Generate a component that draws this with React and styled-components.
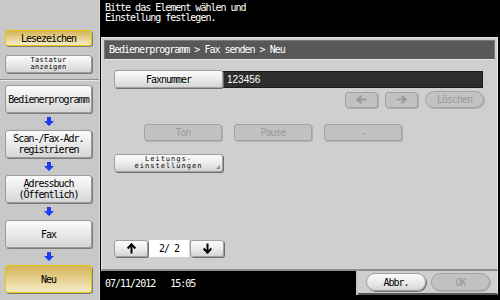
import React from 'react';
import styled, { createGlobalStyle, css } from 'styled-components';

const GlobalStyle = createGlobalStyle`
    html, body {
        margin: 0;
        padding: 0;
        background: #000;
    }
    body {
        font-family: "DejaVu Sans Mono", "Liberation Mono", monospace;
    }
`

const mono = css`
    font-family: "DejaVu Sans Mono", "Liberation Mono", monospace;
    font-size: 10px;
    letter-spacing: -1px;
`

const Screen = styled.div`
    display: flex;
    width: 500px;
    height: 300px;
    overflow: hidden;
`

const Sidebar = styled.div`
    display: flex;
    flex-direction: column;
    align-items: stretch;
    width: 100px;
    box-sizing: border-box;
    padding: 30px 7px 0 5px;
    background: #c8c8c8;
    border-right: 1px solid #d8d8d8;
`

const SideGroup = styled.div`
    display: flex;
    flex-direction: column;
    gap: 9px;
    padding-bottom: 6px;
    margin: 0 -7px 0 -5px;
    padding-left: 5px;
    padding-right: 7px;
    border-bottom: 1px solid #8c8c8c;
    box-shadow: 0 1px 0 #e4e4e4;
`

const SideButton = styled.div`
    ${mono};
    display: flex;
    align-items: center;
    justify-content: center;
    text-align: center;
    box-sizing: border-box;
    height: ${props => props.h || 28}px;
    margin-top: ${props => props.mt || 0}px;
    line-height: 11px;
    color: #000;
    border-radius: 3px;
    border: 1px solid ${props => props.active ? '#e8c800' : '#9a9a9a'};
    background: ${props => props.active
        ? 'linear-gradient(#d2b45a, #e6d08e 50%, #f4ecc8)'
        : 'linear-gradient(#fbfbfb, #e6e6e6 60%, #d6d6d6)'};
    box-shadow: 1px 1px 0 #7c7c7c;
`

const SmallLabel = styled.span`
    font-family: "DejaVu Sans Mono", monospace;
    font-size: 7px;
    letter-spacing: ${props => props.wide ? '1px' : '0.3px'};
    line-height: 7px;
`

const FlowArrow = styled.div`
    display: flex;
    align-items: center;
    justify-content: center;
    height: 17px;
`

const Right = styled.div`
    display: flex;
    flex-direction: column;
    flex: 1;
    background: #000;
`

const Message = styled.div`
    ${mono};
    height: 37px;
    box-sizing: border-box;
    padding: 3px 0 0 5px;
    line-height: 10px;
    color: #fff;
    white-space: pre;
`

const Panel = styled.div`
    display: flex;
    flex-direction: column;
    margin-left: 1px;
    width: 397px;
`

const PanelBody = styled.div`
    display: flex;
    flex-direction: column;
    height: 234px;
    box-sizing: border-box;
    padding: 2px 2px 0 2px;
    background: #cfcfcf;
    border: 1px solid #e6e6e6;
    border-bottom: 2px solid #8e8e8e;
`

const Breadcrumb = styled.div`
    ${mono};
    height: 20px;
    box-sizing: border-box;
    padding: 3px 0 0 4px;
    line-height: 12px;
    color: #fff;
    background: #585858;
    border: 1px solid #7a7a7a;
    border-bottom-color: #e8e8e8;
`

const Content = styled.div`
    display: flex;
    flex-direction: column;
    flex: 1;
    padding: 10px 11px 0 10px;
`

const Row = styled.div`
    display: flex;
    align-items: center;
    gap: ${props => props.gap || 0}px;
    justify-content: ${props => props.end ? 'flex-end' : 'flex-start'};
    margin-top: ${props => props.mt || 0}px;
    margin-bottom: ${props => props.mb || 0}px;
    padding-left: ${props => props.pl || 0}px;
`

const Button = styled.div`
    ${mono};
    position: relative;
    display: flex;
    align-items: center;
    justify-content: center;
    text-align: center;
    box-sizing: border-box;
    width: ${props => props.w}px;
    height: ${props => props.h || 17}px;
    border-radius: ${props => props.pill ? '9px' : '3px'};
    ${props => props.disabled ? css`
        color: #9a9a9a;
        background: #c2c2c2;
        border: 1px solid #a2a2a2;
        box-shadow: 1px 1px 0 #b0b0b0;
    ` : css`
        color: #000;
        background: linear-gradient(#fcfcfc, #e8e8e8 60%, #d4d4d4);
        border: 1px solid #a0a0a0;
        box-shadow: 1px 1px 0 #6e6e6e;
    `}
`

const CornerMark = styled.span`
    position: absolute;
    right: 2px;
    bottom: 2px;
    width: 0;
    height: 0;
    border-left: 4px solid transparent;
    border-bottom: 4px solid #8a8a8a;
`

const Field = styled.div`
    display: flex;
    align-items: center;
    width: 260px;
    height: 17px;
    box-sizing: border-box;
    padding-left: 3px;
    font-family: "Liberation Sans", Arial, sans-serif;
    font-size: 10px;
    color: #fff;
    background: #2e2e2e;
    border: 1px solid #1a1a1a;
`

const PageBox = styled.div`
    ${mono};
    display: flex;
    align-items: center;
    justify-content: center;
    width: 40px;
    height: 17px;
    background: #fff;
    white-space: pre;
`

const Spacer = styled.div`
    flex: 1;
`

const BottomRow = styled.div`
    display: flex;
    height: 24px;
`

const DateBar = styled.div`
    ${mono};
    flex: 1;
    padding: 7px 0 0 4px;
    color: #fff;
    white-space: pre;
    border-right: 2px solid #c8c8c8;
`

const Actions = styled.div`
    display: flex;
    gap: 5px;
    width: 140px;
    box-sizing: border-box;
    padding: 2px 0 0 8px;
    background: #cfcfcf;
    border-right: 1px solid #e6e6e6;
    border-bottom: 2px solid #555;
`

const Arrow = ({ dir = 'down', color = '#000', size = 10 }) => {
    const rot = { up: 180, down: 0, left: 90, right: -90 }[dir];
    return (
        <svg width={size} height={size} viewBox="0 0 10 10" style={{ transform: `rotate(${rot}deg)` }}>
            <path d="M5 0.5 V8.5 M1.5 5 L5 8.8 L8.5 5" fill="none" stroke={color} strokeWidth="1.8" strokeLinejoin="miter" />
        </svg>
    )
}

const BlueArrow = () => (
    <svg width="10" height="9" viewBox="0 0 10 9">
        <path d="M3 0 H7 V4 H10 L5 9 L0 4 H3 Z" fill="#1c3cf0" />
    </svg>
)

const App = () => {
    return (
        <Screen>
            <GlobalStyle />
            <Sidebar>
                <SideGroup>
                    <SideButton h={16} active>Lesezeichen</SideButton>
                    <SideButton h={18}><SmallLabel>Tastatur<br />anzeigen</SmallLabel></SideButton>
                </SideGroup>
                <SideButton mt={5}>Bedienerprogramm</SideButton>
                <FlowArrow><BlueArrow /></FlowArrow>
                <SideButton>Scan-/Fax-Adr.<br />registrieren</SideButton>
                <FlowArrow><BlueArrow /></FlowArrow>
                <SideButton>Adressbuch<br />(Öffentlich)</SideButton>
                <FlowArrow><BlueArrow /></FlowArrow>
                <SideButton>Fax</SideButton>
                <FlowArrow><BlueArrow /></FlowArrow>
                <SideButton active>Neu</SideButton>
            </Sidebar>
            <Right>
                <Message>{'Bitte das Element wählen und\nEinstellung festlegen.'}</Message>
                <Panel>
                    <PanelBody>
                        <Breadcrumb>Bedienerprogramm &gt; Fax senden &gt; Neu</Breadcrumb>
                        <Content>
                            <Row>
                                <Button w={109} h={18}>Faxnummer</Button>
                                <Field>123456</Field>
                            </Row>
                            <Row end gap={7} mt={3}>
                                <Button w={33} h={16} disabled><Arrow dir="left" color="#9a9a9a" size={11} /></Button>
                                <Button w={33} h={16} disabled><Arrow dir="right" color="#9a9a9a" size={11} /></Button>
                                <Button w={59} h={17} pill disabled>Löschen</Button>
                            </Row>
                            <Row gap={12} mt={16} pl={30}>
                                <Button w={78} disabled>Ton</Button>
                                <Button w={78} disabled>Pause</Button>
                                <Button w={78} disabled>-</Button>
                            </Row>
                            <Row mt={13}>
                                <Button w={109} h={18}>
                                    <SmallLabel wide>Leitungs-<br />einstellungen</SmallLabel>
                                    <CornerMark />
                                </Button>
                            </Row>
                            <Spacer />
                            <Row gap={1} mb={12}>
                                <Button w={34}><Arrow dir="up" size={11} /></Button>
                                <PageBox>{'2/ 2'}</PageBox>
                                <Button w={34}><Arrow dir="down" size={11} /></Button>
                            </Row>
                        </Content>
                    </PanelBody>
                    <BottomRow>
                        <DateBar>{'07/11/2012   15:05'}</DateBar>
                        <Actions>
                            <Button w={60} h={18} pill>Abbr.</Button>
                            <Button w={59} h={18} pill disabled>OK</Button>
                        </Actions>
                    </BottomRow>
                </Panel>
            </Right>
        </Screen>
    )
}

export default App;
